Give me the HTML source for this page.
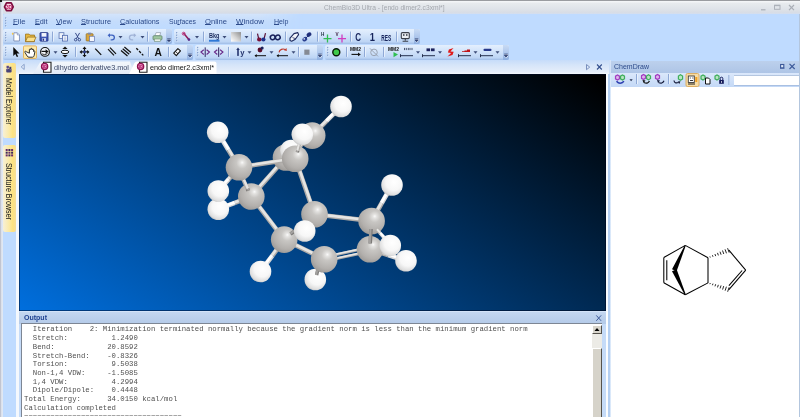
<!DOCTYPE html>
<html lang="en"><head><meta charset="utf-8"><title>ChemBio3D Ultra - [endo dimer2.c3xml*]</title>
<style>
*{box-sizing:border-box;margin:0;padding:0}
html,body{width:800px;height:417px;overflow:hidden;background:#bfdbff;}
body{position:relative;will-change:transform;font-family:"Liberation Sans",sans-serif;font-size:8px;color:#15326e;}
.abs{position:absolute}
#titlebar{left:0;top:0;width:800px;height:14px;background:linear-gradient(#f3f5f7 0,#f3f5f7 2px,#e8ebee 3px,#e1e5ea 55%,#d8dde5 88%,#d3def0 100%);}
#topline{left:0;top:0;width:800px;height:1px;background:#9a9ca0}
#corner{left:0;top:0;width:2px;height:2px;background:#111}
#leftedge{left:0;top:1px;width:3px;height:416px;background:linear-gradient(to right,#bcc0cc 0,#c8ccd8 1.200px,#e2e8f2 1.600px,#dfe7f3 3px)}
#title{left:322px;top:2px;width:124px;height:11px;line-height:11px;text-align:center;color:#a3a7ad;font-size:8.6px;white-space:nowrap;letter-spacing:-0.1px}
#menubar{left:3px;top:14px;width:300px;height:15px;border-radius:2px;background:linear-gradient(#d3e4fb,#c4dcfc 50%,#bfdbff);-webkit-mask-image:linear-gradient(to right,#000 85%,transparent);mask-image:linear-gradient(to right,#000 85%,transparent)}
.menu{top:15px;height:14px;line-height:14px;font-size:8.3px;color:#2a4a8c;white-space:nowrap}
.menu u{text-decoration:underline;text-underline-offset:1px}
.tb{height:15px;border-radius:2px;background:linear-gradient(#e4effd 0,#d3e4fa 40%,#bdd5f5 85%,#9fbce6 100%);}
.ovf{width:6px;height:15px;border-radius:0 2px 2px 0;background:linear-gradient(#c8daf4,#a9c3ea 60%,#8eafe0)}
#tabstrip{left:16px;top:60px;width:592.500px;height:14px;background:linear-gradient(#c6dcfa 0,#d6e5f9 5px,#e6eefa 12px,#f4f8fd 14px)}
.tab{top:61px;height:13px;line-height:13px;font-size:8.3px;white-space:nowrap;color:#333}
#view{left:19px;top:74px;width:587px;height:237px;overflow:hidden;box-shadow:inset 1px 1px 0 rgba(0,10,40,.5),inset -1px -1px 0 rgba(0,0,20,.45);background:linear-gradient(213deg,#000 0%,#000 1.9%,#006fde 100%)}
#view .r{display:none}
#outhead{left:19px;top:311px;width:587px;height:13px;background:linear-gradient(#dce9fb 0,#c3d6f0 1.500px,#b4cae8 100%);}
#outtitle{left:24px;top:312px;height:12px;line-height:12px;font-size:8.3px;font-weight:bold;color:#1f4190}
#outbody{left:21px;top:323.3px;width:581px;height:94px;background:#fff;border-left:1px solid #7d8694;border-top:1px solid #7d8694;overflow:hidden}
#outtext{left:24px;top:325.3px;font-family:"Liberation Mono",monospace;font-size:7.3px;line-height:8.73px;color:#505050;white-space:pre}
#cdhead{left:611px;top:61px;width:189px;height:12px;background:linear-gradient(#bcd0ec,#aec5e6)}
#cdtitle{left:614px;top:61px;height:12px;line-height:12px;font-size:8.3px;color:#2a4a8c}
#cdtool{left:611px;top:73px;width:189px;height:14px;background:linear-gradient(#dbe8fb,#c3d8f6)}
#cdinput{left:734px;top:74.500px;width:64.500px;height:11px;background:#fff;border-top:1px solid #b4c6e0;border-bottom:1px solid #a9c0e2}
#cdbody{left:611px;top:87px;width:187.500px;height:330px;background:#fff}
#rightedge{left:798.500px;top:14px;width:1.500px;height:403px;background:#b3c6de}
.side{left:3px;width:13px;border-radius:2px;background:linear-gradient(to right,#f7f0d6 0,#fbeaa8 45%,#fde280 75%,#f7de98 100%);}
.sidetxt{font-size:8.3px;color:#3a3a3a;white-space:nowrap;transform-origin:0 0;transform:rotate(90deg);line-height:13px;height:13px}
</style></head>
<body>
<div class="abs" id="titlebar"></div>
<div class="abs" id="topline"></div>
<div class="abs" id="leftedge"></div>
<div class="abs" id="corner"></div>
<div class="abs" style="left:324px;top:2px;height:11px;line-height:11px;font-size:8px;color:#a4a8ae;white-space:nowrap;transform-origin:0 50%;transform:scaleX(0.8339)">ChemBio3D Ultra - [endo dimer2.c3xml*]</div>
<div class="abs" id="menubar"></div>
<div class="abs" style="left:13px;top:15px;height:14px;line-height:14px;font-size:7.8px;color:#2c4a8a;white-space:nowrap;transform-origin:0 50%;transform:scaleX(0.9938)"><u style="text-underline-offset:0.3px;text-decoration-thickness:0.8px">F</u>ile</div>
<div class="abs" style="left:34.5px;top:15px;height:14px;line-height:14px;font-size:7.8px;color:#2c4a8a;white-space:nowrap;transform-origin:0 50%;transform:scaleX(0.9302)"><u style="text-underline-offset:0.3px;text-decoration-thickness:0.8px">E</u>dit</div>
<div class="abs" style="left:56px;top:15px;height:14px;line-height:14px;font-size:7.8px;color:#2c4a8a;white-space:nowrap;transform-origin:0 50%;transform:scaleX(0.9543)"><u style="text-underline-offset:0.3px;text-decoration-thickness:0.8px">V</u>iew</div>
<div class="abs" style="left:81px;top:15px;height:14px;line-height:14px;font-size:7.8px;color:#2c4a8a;white-space:nowrap;transform-origin:0 50%;transform:scaleX(0.9481)"><u style="text-underline-offset:0.3px;text-decoration-thickness:0.8px">S</u>tructure</div>
<div class="abs" style="left:120px;top:15px;height:14px;line-height:14px;font-size:7.8px;color:#2c4a8a;white-space:nowrap;transform-origin:0 50%;transform:scaleX(0.9298)"><u style="text-underline-offset:0.3px;text-decoration-thickness:0.8px">C</u>alculations</div>
<div class="abs" style="left:169px;top:15px;height:14px;line-height:14px;font-size:7.8px;color:#2c4a8a;white-space:nowrap;transform-origin:0 50%;transform:scaleX(0.8772)">Su<u style="text-underline-offset:0.3px;text-decoration-thickness:0.8px">r</u>faces</div>
<div class="abs" style="left:205px;top:15px;height:14px;line-height:14px;font-size:7.8px;color:#2c4a8a;white-space:nowrap;transform-origin:0 50%;transform:scaleX(0.9757)"><u style="text-underline-offset:0.3px;text-decoration-thickness:0.8px">O</u>nline</div>
<div class="abs" style="left:236px;top:15px;height:14px;line-height:14px;font-size:7.8px;color:#2c4a8a;white-space:nowrap;transform-origin:0 50%;transform:scaleX(1.0096)"><u style="text-underline-offset:0.3px;text-decoration-thickness:0.8px">W</u>indow</div>
<div class="abs" style="left:273.5px;top:15px;height:14px;line-height:14px;font-size:7.8px;color:#2c4a8a;white-space:nowrap;transform-origin:0 50%;transform:scaleX(0.9036)"><u style="text-underline-offset:0.3px;text-decoration-thickness:0.8px">H</u>elp</div>
<div class="abs tb" style="left:3px;top:29px;width:169px;height:14.5px"></div>
<div class="abs ovf" style="left:166px;top:29px;height:14.5px"></div>
<div class="abs tb" style="left:174px;top:29px;width:246px;height:14.5px"></div>
<div class="abs ovf" style="left:414px;top:29px;height:14.5px"></div>
<div class="abs tb" style="left:3px;top:44.5px;width:190px;height:15px"></div>
<div class="abs ovf" style="left:187px;top:44.5px;height:15px"></div>
<div class="abs tb" style="left:195px;top:44.5px;width:128px;height:15px"></div>
<div class="abs ovf" style="left:317px;top:44.5px;height:15px"></div>
<div class="abs tb" style="left:325px;top:44.5px;width:184px;height:15px"></div>
<div class="abs ovf" style="left:503px;top:44.5px;height:15px"></div>
<div class="abs side" style="top:63px;height:75px"></div>
<div class="abs side" style="top:145px;height:87px"></div>
<div class="abs" style="left:15.4px;top:78.3px;height:13px;line-height:13px;font-size:8.8px;color:#151515;white-space:nowrap;transform-origin:0 0;transform:rotate(90deg) scaleX(0.7926)">Model Explorer</div>
<div class="abs" style="left:15.4px;top:163px;height:13px;line-height:13px;font-size:8.8px;color:#151515;white-space:nowrap;transform-origin:0 0;transform:rotate(90deg) scaleX(0.8096)">Structure Browser</div>
<div class="abs" style="left:16px;top:74px;width:3px;height:343px;background:#f4f8fd"></div>
<div class="abs" style="left:606px;top:74px;width:5px;height:343px;background:linear-gradient(to right,#fbfdff 0,#fbfdff 1.500px,#b4cff2 1.900px,#b4cff2 4.300px,#eef5fd 4.600px)"></div>
<div class="abs" style="left:19px;top:311px;width:587px;height:106px;background:#c5dbf8"></div>
<div class="abs" style="left:608.500px;top:60px;width:2.500px;height:14px;background:linear-gradient(to right,#c9dcf7,#d9e6f9)"></div>
<div class="abs" id="tabstrip"></div>
<svg class="abs" style="left:0;top:0" width="800" height="80" viewBox="0 0 800 80"><defs><linearGradient id="gtab" x1="0" y1="0" x2="0" y2="1"><stop offset="0" stop-color="#f3f7fc"/><stop offset="1" stop-color="#e3ebf7"/></linearGradient></defs><path d="M33 74L40 62.5Q40.600 61.500 42 61.500H130L134 74z" fill="url(#gtab)"/><path d="M129 74L134.500 63Q135.300 61.500 137 61.500H214.500Q216.500 61.500 216.500 63.500V74z" fill="#fff"/></svg>
<div class="abs" style="left:54px;top:61px;height:13px;line-height:13px;font-size:7.8px;color:#3c4868;white-space:nowrap;transform-origin:0 50%;transform:scaleX(0.9353)">dihydro derivative3.mol</div>
<div class="abs" style="left:150px;top:61px;height:13px;line-height:13px;font-size:7.8px;color:#111;white-space:nowrap;transform-origin:0 50%;transform:scaleX(0.9288)">endo dimer2.c3xml*</div>
<div class="abs" id="view"><div class="abs r"></div><svg class="abs" style="left:0;top:0" width="587" height="237" viewBox="19 74 587 237" stroke-linecap="butt"><defs>
<radialGradient id="gH" cx="0.58" cy="0.38" r="0.68" fx="0.6" fy="0.36">
<stop offset="0" stop-color="#ffffff"/><stop offset="0.55" stop-color="#f7f7f7"/><stop offset="0.85" stop-color="#dedede"/><stop offset="1" stop-color="#b8b8b8"/></radialGradient>
<radialGradient id="gC" cx="0.6" cy="0.36" r="0.72" fx="0.62" fy="0.32">
<stop offset="0" stop-color="#fafafa"/><stop offset="0.1" stop-color="#e4e3e1"/><stop offset="0.3" stop-color="#c8c6c3"/><stop offset="0.7" stop-color="#b3b0ad"/><stop offset="0.9" stop-color="#a19e9b"/><stop offset="1" stop-color="#8c8987"/></radialGradient>
</defs>
<line x1="312.2" y1="135.6" x2="326.6" y2="121.0" stroke="#aeaba8" stroke-width="4.6"/>
<line x1="311.8" y1="135.2" x2="326.2" y2="120.7" stroke="#e6e5e3" stroke-width="2.76"/>
<line x1="326.6" y1="121.0" x2="341.0" y2="106.5" stroke="#d8d8d8" stroke-width="4.6"/>
<line x1="326.2" y1="120.7" x2="340.6" y2="106.1" stroke="#ffffff" stroke-width="2.76"/>
<circle cx="341" cy="106.5" r="10.8" fill="url(#gH)"/>
<line x1="251.3" y1="196.5" x2="286.0" y2="157.5" stroke="#aeaba8" stroke-width="4.6"/>
<line x1="250.9" y1="196.2" x2="285.6" y2="157.2" stroke="#e6e5e3" stroke-width="2.76"/>
<line x1="286.0" y1="157.5" x2="312.2" y2="135.6" stroke="#aeaba8" stroke-width="4.6"/>
<line x1="285.7" y1="157.1" x2="311.9" y2="135.2" stroke="#e6e5e3" stroke-width="2.76"/>
<circle cx="286" cy="157.5" r="13.3" fill="url(#gC)"/>
<circle cx="291" cy="150.5" r="10.8" fill="url(#gH)"/>
<circle cx="312.2" cy="135.6" r="13.3" fill="url(#gC)"/>
<line x1="239.0" y1="167.3" x2="295.2" y2="158.8" stroke="#aeaba8" stroke-width="4.4"/>
<line x1="238.9" y1="166.8" x2="295.1" y2="158.3" stroke="#e6e5e3" stroke-width="2.64"/>
<line x1="239.0" y1="167.3" x2="228.3" y2="149.8" stroke="#aeaba8" stroke-width="4.6"/>
<line x1="239.4" y1="167.0" x2="228.8" y2="149.5" stroke="#e6e5e3" stroke-width="2.76"/>
<line x1="228.3" y1="149.8" x2="217.7" y2="132.3" stroke="#d8d8d8" stroke-width="4.6"/>
<line x1="228.8" y1="149.5" x2="218.1" y2="132.0" stroke="#ffffff" stroke-width="2.76"/>
<circle cx="217.7" cy="132.3" r="10.8" fill="url(#gH)"/>
<line x1="295.2" y1="158.8" x2="314.5" y2="214.2" stroke="#aeaba8" stroke-width="4.6"/>
<line x1="295.7" y1="158.6" x2="315.0" y2="214.1" stroke="#e6e5e3" stroke-width="2.76"/>
<line x1="314.5" y1="214.2" x2="371.6" y2="221.0" stroke="#aeaba8" stroke-width="4.6"/>
<line x1="314.6" y1="213.8" x2="371.7" y2="220.5" stroke="#e6e5e3" stroke-width="2.76"/>
<line x1="371.6" y1="221.0" x2="381.8" y2="203.0" stroke="#aeaba8" stroke-width="4.6"/>
<line x1="371.2" y1="220.8" x2="381.4" y2="202.8" stroke="#e6e5e3" stroke-width="2.76"/>
<line x1="381.8" y1="203.0" x2="392.0" y2="185.0" stroke="#d8d8d8" stroke-width="4.6"/>
<line x1="381.4" y1="202.8" x2="391.6" y2="184.8" stroke="#ffffff" stroke-width="2.76"/>
<circle cx="392" cy="185" r="10.8" fill="url(#gH)"/>
<line x1="251.3" y1="196.5" x2="284.2" y2="239.6" stroke="#aeaba8" stroke-width="4.6"/>
<line x1="251.7" y1="196.2" x2="284.6" y2="239.3" stroke="#e6e5e3" stroke-width="2.76"/>
<line x1="284.2" y1="239.6" x2="324.2" y2="259.2" stroke="#aeaba8" stroke-width="4.6"/>
<line x1="284.4" y1="239.2" x2="324.4" y2="258.8" stroke="#e6e5e3" stroke-width="2.76"/>
<line x1="284.2" y1="239.6" x2="272.4" y2="255.6" stroke="#aeaba8" stroke-width="4.6"/>
<line x1="283.8" y1="239.3" x2="271.9" y2="255.3" stroke="#e6e5e3" stroke-width="2.76"/>
<line x1="272.4" y1="255.6" x2="260.5" y2="271.5" stroke="#d8d8d8" stroke-width="4.6"/>
<line x1="271.9" y1="255.3" x2="260.1" y2="271.2" stroke="#ffffff" stroke-width="2.76"/>
<circle cx="260.5" cy="271.5" r="10.8" fill="url(#gH)"/>
<line x1="323.8" y1="257.3" x2="369.6" y2="247.3" stroke="#aeaba8" stroke-width="2.8"/>
<line x1="323.7" y1="256.8" x2="369.5" y2="246.9" stroke="#e6e5e3" stroke-width="1.68"/>
<line x1="324.6" y1="261.2" x2="370.4" y2="251.3" stroke="#aeaba8" stroke-width="2.8"/>
<line x1="324.5" y1="260.7" x2="370.3" y2="250.8" stroke="#e6e5e3" stroke-width="1.68"/>
<circle cx="315.3" cy="279.5" r="10.8" fill="url(#gH)"/>
<line x1="318.2" y1="268.0" x2="316.6" y2="275.0" stroke="#7d7b79" stroke-width="3.4"/>
<line x1="317.7" y1="267.9" x2="316.1" y2="274.9" stroke="#a3a19f" stroke-width="2.04"/>
<line x1="251.3" y1="196.5" x2="234.8" y2="202.9" stroke="#aeaba8" stroke-width="4.6"/>
<line x1="251.1" y1="196.0" x2="234.6" y2="202.4" stroke="#e6e5e3" stroke-width="2.76"/>
<line x1="234.8" y1="202.9" x2="218.3" y2="209.2" stroke="#d8d8d8" stroke-width="4.6"/>
<line x1="234.6" y1="202.4" x2="218.1" y2="208.8" stroke="#ffffff" stroke-width="2.76"/>
<circle cx="218.3" cy="209.25" r="10.8" fill="url(#gH)"/>
<circle cx="251.3" cy="196.5" r="13.3" fill="url(#gC)"/>
<line x1="243.0" y1="179.0" x2="247.5" y2="189.0" stroke="#aeaba8" stroke-width="4.0"/>
<line x1="243.5" y1="178.8" x2="248.0" y2="188.8" stroke="#e6e5e3" stroke-width="2.40"/>
<line x1="247.5" y1="189.0" x2="248.3" y2="190.8" stroke="#7d7b79" stroke-width="4.0"/>
<line x1="248.0" y1="188.8" x2="248.8" y2="190.6" stroke="#a3a19f" stroke-width="2.40"/>
<line x1="239.0" y1="167.3" x2="228.7" y2="179.2" stroke="#aeaba8" stroke-width="4.6"/>
<line x1="238.6" y1="167.0" x2="228.3" y2="178.8" stroke="#e6e5e3" stroke-width="2.76"/>
<line x1="228.7" y1="179.2" x2="218.3" y2="191.0" stroke="#d8d8d8" stroke-width="4.6"/>
<line x1="228.3" y1="178.8" x2="217.9" y2="190.7" stroke="#ffffff" stroke-width="2.76"/>
<circle cx="218.3" cy="191" r="10.8" fill="url(#gH)"/>
<circle cx="239" cy="167.3" r="13.3" fill="url(#gC)"/>
<circle cx="295.2" cy="158.75" r="13.3" fill="url(#gC)"/>
<line x1="297.3" y1="152.3" x2="297.8" y2="150.5" stroke="#7d7b79" stroke-width="3.4"/>
<line x1="296.8" y1="152.2" x2="297.3" y2="150.4" stroke="#a3a19f" stroke-width="2.04"/>
<line x1="297.8" y1="150.5" x2="299.5" y2="144.0" stroke="#aeaba8" stroke-width="3.4"/>
<line x1="297.3" y1="150.4" x2="299.0" y2="143.9" stroke="#e6e5e3" stroke-width="2.04"/>
<circle cx="302.3" cy="134.3" r="10.8" fill="url(#gH)"/>
<circle cx="284.2" cy="239.6" r="13.3" fill="url(#gC)"/>
<line x1="290.5" y1="234.0" x2="297.0" y2="229.5" stroke="#7d7b79" stroke-width="3.6"/>
<line x1="290.2" y1="233.6" x2="296.7" y2="229.1" stroke="#a3a19f" stroke-width="2.16"/>
<circle cx="324.2" cy="259.25" r="13.3" fill="url(#gC)"/>
<circle cx="314.5" cy="214.25" r="13.3" fill="url(#gC)"/>
<line x1="370.0" y1="249.3" x2="388.0" y2="255.0" stroke="#aeaba8" stroke-width="4.6"/>
<line x1="370.2" y1="248.8" x2="388.2" y2="254.5" stroke="#e6e5e3" stroke-width="2.76"/>
<line x1="388.0" y1="255.0" x2="406.0" y2="260.8" stroke="#d8d8d8" stroke-width="4.6"/>
<line x1="388.2" y1="254.5" x2="406.2" y2="260.3" stroke="#ffffff" stroke-width="2.76"/>
<circle cx="406" cy="260.75" r="10.8" fill="url(#gH)"/>
<circle cx="370" cy="249.3" r="13.3" fill="url(#gC)"/>
<circle cx="371.6" cy="221" r="13.3" fill="url(#gC)"/>
<line x1="371.0" y1="229.0" x2="370.2" y2="243.5" stroke="#7d7b79" stroke-width="3.6"/>
<line x1="370.5" y1="229.0" x2="369.7" y2="243.5" stroke="#a3a19f" stroke-width="2.16"/>
<line x1="376.5" y1="229.5" x2="380.0" y2="233.2" stroke="#aeaba8" stroke-width="3.4"/>
<line x1="376.9" y1="229.2" x2="380.4" y2="232.9" stroke="#e6e5e3" stroke-width="2.04"/>
<line x1="380.0" y1="233.2" x2="384.0" y2="237.5" stroke="#d8d8d8" stroke-width="3.4"/>
<line x1="380.4" y1="232.9" x2="384.4" y2="237.2" stroke="#ffffff" stroke-width="2.04"/>
<circle cx="390.25" cy="245.5" r="10.8" fill="url(#gH)"/>
<circle cx="304.7" cy="231" r="10.8" fill="url(#gH)"/>
</svg></div>
<div class="abs" id="outhead"></div>
<div class="abs" style="left:24px;top:312px;height:12px;line-height:12px;font-size:7.8px;color:#1f4190;font-weight:bold;white-space:nowrap;transform-origin:0 50%;transform:scaleX(0.9003)">Output</div>
<div class="abs" id="outbody"></div>
<div class="abs" id="outtext">  Iteration    2: Minimization terminated normally because the gradient norm is less than the minimum gradient norm
  Stretch:          1.2490
  Bend:            20.8592
  Stretch-Bend:    -0.8326
  Torsion:          9.5038
  Non-1,4 VDW:     -1.5085
  1,4 VDW:          4.2994
  Dipole/Dipole:    0.4448
Total Energy:      34.0150 kcal/mol
Calculation completed
====================================</div>
<div class="abs" style="left:592px;top:325px;width:10px;height:92px;background:#ecebe6"></div>
<div class="abs" style="left:592px;top:325px;width:10px;height:9px;background:#d8d5cc;border:1px solid;border-color:#fff #55524c #55524c #fff"></div>
<svg class="abs" style="left:592px;top:325px" width="10" height="9" viewBox="0 0 10 9"><path d="M2.500 6h5l-2.500-3z" fill="#000"/></svg>
<div class="abs" style="left:592px;top:348px;width:10px;height:69px;background:#d6d3ca;border:1px solid;border-color:#fff #55524c #55524c #fff;border-bottom:none"></div>
<div class="abs" id="cdhead"></div>
<div class="abs" style="left:614px;top:61px;height:12px;line-height:12px;font-size:7.8px;color:#2c4a8a;white-space:nowrap;transform-origin:0 50%;transform:scaleX(0.8974)">ChemDraw</div>
<div class="abs" id="cdtool"></div>
<div class="abs" id="cdinput"></div>
<div class="abs" id="cdbody"></div>
<div class="abs" id="rightedge"></div>
<svg class="abs" style="left:0;top:0" width="800" height="417" viewBox="0 0 800 417">
<polygon points="619.5,78.8 617.5,80.1 615.5,78.8 615.5,76.2 617.5,74.9 619.5,76.2" fill="#dcb4ea" stroke="#a23cc2" stroke-width="1.2"/>
<polygon points="624.5,78.8 622.5,80.1 620.5,78.8 620.5,76.2 622.5,74.9 624.5,76.2" fill="#b9e6c3" stroke="#3fae5c" stroke-width="1.2"/>
<path d="M616.5 81.300q3.500 4 7.500 0" fill="none" stroke="#2c3fb0" stroke-width="1.500"/>
<path d="M629.500 79.300h3.200l-1.600 1.900z" fill="#25304e"/>
<rect x="636" y="74" width="1" height="10" fill="#8fa9d6"/><rect x="637" y="74" width="1" height="10" fill="#eef4fd" opacity=".8"/>
<polygon points="645.5,78.3 643.5,79.6 641.5,78.3 641.5,75.7 643.5,74.4 645.5,75.7" fill="#dcb4ea" stroke="#a23cc2" stroke-width="1.2"/>
<polygon points="650.5,78.6 648.5,79.9 646.5,78.6 646.5,76.0 648.5,74.7 650.5,76.0" fill="#b9e6c3" stroke="#3fae5c" stroke-width="1.2"/>
<path d="M644 82.500q3.500 2 5.500-1.500" fill="none" stroke="#111" stroke-width="1.200"/><path d="M642.500 80l3 .5-2 2.600z" fill="#111"/>
<polygon points="659.5,78.3 657.5,79.6 655.5,78.3 655.5,75.7 657.5,74.4 659.5,75.7" fill="#dcb4ea" stroke="#a23cc2" stroke-width="1.2"/>
<path d="M658.500 82.500q3.800 2 5.500-1.800" fill="none" stroke="#141a3a" stroke-width="1.200"/><path d="M657 80l3 .5-2 2.600z" fill="#141a3a"/>
<rect x="668" y="74" width="1" height="10" fill="#8fa9d6"/><rect x="669" y="74" width="1" height="10" fill="#eef4fd" opacity=".8"/>
<polygon points="682.6,78.9 680.5,80.3 678.4,78.9 678.4,76.1 680.5,74.7 682.6,76.1" fill="#b9e6c3" stroke="#3fae5c" stroke-width="1.2"/>
<path d="M674 80.500q.5 3.500 4.500 2" fill="none" stroke="#141a3a" stroke-width="1.200"/><path d="M680.500 81.200l-2.800.4 1.600 2.400z" fill="#141a3a"/>
<rect x="686" y="73.500" width="13" height="13" rx="1.500" fill="#f7dca4" stroke="#dcae62" stroke-width="1"/>
<rect x="688.300" y="76" width="6" height="6.500" fill="#fff" stroke="#3a3a3a" stroke-width=".9"/><path d="M689.800 78h1M692.300 78h1M690 80.500h3" stroke="#222" stroke-width=".9"/><rect x="695.300" y="77" width="2" height="5" fill="#f0a020"/><path d="M688 84h7" stroke="#222" stroke-width="1"/>
<polygon points="705.0,78.8 703.0,80.1 701.0,78.8 701.0,76.2 703.0,74.9 705.0,76.2" fill="#b9e6c3" stroke="#3fae5c" stroke-width="1.2"/>
<path d="M705.500 78h3l1.500 1.500v4.500h-4.500z" fill="#fff" stroke="#111" stroke-width="1"/>
<polygon points="719.0,78.8 717.0,80.1 715.0,78.8 715.0,76.2 717.0,74.9 719.0,76.2" fill="#b9e6c3" stroke="#3fae5c" stroke-width="1.2"/>
<rect x="719.200" y="80" width="4.600" height="3.800" fill="#141a5a"/><path d="M720.200 80v-1.500a1.300 1.300 0 0 1 2.600 0v1.500" fill="none" stroke="#141a5a" stroke-width="1"/><rect x="721" y="81.300" width="1" height="1.300" fill="#fff"/>
<rect x="728" y="75" width="1.500" height="10" fill="#a9bfe2"/>
<rect x="780.600" y="64.500" width="3.200" height="3.400" fill="#dfe8f6" stroke="#3d5a9a" stroke-width="1.100"/><path d="M780 68.300h4.400" stroke="#3d5a9a" stroke-width=".8"/>
<path d="M789.500 63.800l5.200 5.200M794.700 63.800l-5.200 5.200" stroke="#3d5a9a" stroke-width="1.200"/>
<line x1="685.3" y1="245.4" x2="663.8" y2="257.5" stroke="#000" stroke-width="1.05"/>
<line x1="663.8" y1="257.5" x2="663.8" y2="282.8" stroke="#000" stroke-width="1.05"/>
<line x1="663.8" y1="282.8" x2="685.3" y2="294.7" stroke="#000" stroke-width="1.05"/>
<line x1="685.3" y1="294.7" x2="708.0" y2="282.9" stroke="#000" stroke-width="1.05"/>
<line x1="708.0" y1="282.9" x2="708.0" y2="257.7" stroke="#000" stroke-width="1.05"/>
<line x1="708.0" y1="257.7" x2="685.3" y2="245.4" stroke="#000" stroke-width="1.05"/>
<line x1="666.8" y1="260.3" x2="666.8" y2="280.2" stroke="#000" stroke-width="1.05"/>
<line x1="728.9" y1="250.2" x2="745.7" y2="270.2" stroke="#000" stroke-width="1.05"/>
<line x1="745.7" y1="270.2" x2="728.9" y2="289.7" stroke="#000" stroke-width="1.05"/>
<line x1="742.1" y1="270.5" x2="728.9" y2="285.7" stroke="#000" stroke-width="1.05"/>
<polygon points="684.8,245.2 672.0,269.3 676.6,271.3 685.8,245.6" fill="#000"/>
<polygon points="685.8,294.5 676.6,269.3 672.0,271.3 684.8,294.9" fill="#000"/>
<line x1="710.29" y1="257.51" x2="709.89" y2="256.39" stroke="#000" stroke-width=".85"/>
<line x1="712.99" y1="256.81" x2="712.42" y2="255.21" stroke="#000" stroke-width=".85"/>
<line x1="715.69" y1="256.11" x2="714.94" y2="254.04" stroke="#000" stroke-width=".85"/>
<line x1="718.38" y1="255.41" x2="717.47" y2="252.87" stroke="#000" stroke-width=".85"/>
<line x1="721.08" y1="254.71" x2="720.00" y2="251.69" stroke="#000" stroke-width=".85"/>
<line x1="723.78" y1="254.00" x2="722.53" y2="250.52" stroke="#000" stroke-width=".85"/>
<line x1="726.47" y1="253.30" x2="725.06" y2="249.35" stroke="#000" stroke-width=".85"/>
<line x1="729.17" y1="252.60" x2="727.58" y2="248.18" stroke="#000" stroke-width=".85"/>
<line x1="709.90" y1="284.15" x2="710.28" y2="283.01" stroke="#000" stroke-width=".85"/>
<line x1="712.44" y1="285.24" x2="712.97" y2="283.62" stroke="#000" stroke-width=".85"/>
<line x1="714.97" y1="286.33" x2="715.66" y2="284.23" stroke="#000" stroke-width=".85"/>
<line x1="717.51" y1="287.41" x2="718.35" y2="284.85" stroke="#000" stroke-width=".85"/>
<line x1="720.04" y1="288.50" x2="721.04" y2="285.46" stroke="#000" stroke-width=".85"/>
<line x1="722.58" y1="289.59" x2="723.72" y2="286.07" stroke="#000" stroke-width=".85"/>
<line x1="725.12" y1="290.68" x2="726.41" y2="286.68" stroke="#000" stroke-width=".85"/>
<line x1="727.65" y1="291.76" x2="729.10" y2="287.30" stroke="#000" stroke-width=".85"/>
</svg>
<svg class="abs" style="left:0;top:0;font-family:'Liberation Sans',sans-serif" width="800" height="417" viewBox="0 0 800 417"><defs><linearGradient id="gsq" x1="1" y1="0" x2="0" y2="1"><stop offset="0" stop-color="#8c8c8c"/><stop offset=".55" stop-color="#d4d4d4"/><stop offset="1" stop-color="#ffffff"/></linearGradient></defs>
<path d="M6.500 2.900h4.700l2 3.900-2 3.900H6.500L4.500 6.800z" fill="#fbd3e4" stroke="#7d0c3e" stroke-width="1.700" stroke-linejoin="round"/>
<text x="8.85" y="8.7" font-size="4.8" font-weight="bold" fill="#b8145a" text-anchor="middle" letter-spacing="-0.2">3D</text>
<path d="M761 9.800h4.500" stroke="#a9aeb6" stroke-width="1.200"/>
<rect x="774.500" y="5.300" width="5.500" height="4" fill="none" stroke="#adb2ba" stroke-width="1"/><path d="M774.500 5.500h5.500" stroke="#adb2ba" stroke-width="1.300"/>
<path d="M789 5l5 5.200M794 5l-5 5.200" stroke="#a9aeb6" stroke-width="1.200"/>
<rect x="5" y="17.5" width="1.3" height="1.3" fill="#6f8fc4"/>
<rect x="5.6" y="18.1" width="1" height="1" fill="#fff" opacity=".8"/>
<rect x="5" y="20.1" width="1.3" height="1.3" fill="#6f8fc4"/>
<rect x="5.6" y="20.7" width="1" height="1" fill="#fff" opacity=".8"/>
<rect x="5" y="22.7" width="1.3" height="1.3" fill="#6f8fc4"/>
<rect x="5.6" y="23.3" width="1" height="1" fill="#fff" opacity=".8"/>
<rect x="5" y="25.3" width="1.3" height="1.3" fill="#6f8fc4"/>
<rect x="5.6" y="25.9" width="1" height="1" fill="#fff" opacity=".8"/>
<g transform="translate(0,0.6)">
<rect x="5" y="31.5" width="1.3" height="1.3" fill="#6f8fc4"/>
<rect x="5.6" y="32.1" width="1" height="1" fill="#fff" opacity=".8"/>
<rect x="5" y="34.1" width="1.3" height="1.3" fill="#6f8fc4"/>
<rect x="5.6" y="34.7" width="1" height="1" fill="#fff" opacity=".8"/>
<rect x="5" y="36.7" width="1.3" height="1.3" fill="#6f8fc4"/>
<rect x="5.6" y="37.3" width="1" height="1" fill="#fff" opacity=".8"/>
<rect x="5" y="39.3" width="1.3" height="1.3" fill="#6f8fc4"/>
<rect x="5.6" y="39.9" width="1" height="1" fill="#fff" opacity=".8"/>
<g transform="translate(2.24 5.12) scale(0.86)"><path d="M13.5 31.5h4l2.5 2.5v7h-6.5z" fill="#fff" stroke="#6b7fae" stroke-width=".9"/><path d="M17.5 31.5v2.5h2.5" fill="#dfe8f6" stroke="#6b7fae" stroke-width=".7"/><path d="M12 31l1.5 1.5-1.5 1.5-1-1.5z" fill="#f6c646"/></g>
<path d="M25.5 33.5h3.5l1 1h4.5v6.5h-9z" fill="#e7b83f" stroke="#9a7420" stroke-width=".8"/><path d="M25.5 41l2-4.5h8.5l-2 4.5z" fill="#fbe08a" stroke="#9a7420" stroke-width=".8"/>
<g transform="translate(4.40 3.64) scale(0.9)"><rect x="39.5" y="31.5" width="9" height="9.5" rx=".8" fill="#3d55b5" stroke="#27337e" stroke-width=".8"/><rect x="41.3" y="32" width="5.4" height="4" fill="#f1f4fb"/><rect x="42" y="37.6" width="4.2" height="3.2" fill="#c9d2ee"/><rect x="42.6" y="38.2" width="1.4" height="2.4" fill="#27337e"/></g>
<rect x="52" y="31" width="1" height="10" fill="#8fa9d6"/><rect x="53" y="31" width="1" height="10" fill="#eef4fd" opacity=".8"/>
<g transform="translate(7.58 4.37) scale(0.88)"><rect x="58.5" y="31.5" width="5.5" height="6.5" fill="#eef3fb" stroke="#5872b0" stroke-width=".9"/><rect x="62.5" y="34.5" width="5.5" height="6.5" fill="#f7f9fd" stroke="#4a66ac" stroke-width=".9"/><path d="M63.8 36.5h3M63.8 38h3M63.8 39.5h3" stroke="#8aa0d0" stroke-width=".6"/></g>
<g transform="translate(12.40 5.86) scale(0.84)"><path d="M75 31.5l4 7M80 31.5l-4 7" stroke="#2c3f80" stroke-width="1.1"/><circle cx="75.3" cy="39.6" r="1.5" fill="none" stroke="#2c3f80" stroke-width="1"/><circle cx="79.7" cy="39.6" r="1.5" fill="none" stroke="#2c3f80" stroke-width="1"/></g>
<g transform="translate(12.63 5.12) scale(0.86)"><rect x="85.5" y="32.5" width="8" height="8.5" rx=".8" fill="#d9a53a" stroke="#8a6a22" stroke-width=".8"/><rect x="87.6" y="31.3" width="3.8" height="2.2" fill="#7f8aa8"/><rect x="89.5" y="35.5" width="5.5" height="6" fill="#f4f6fc" stroke="#5f76b2" stroke-width=".8"/></g>
<g transform="translate(19.98 6.55) scale(0.82)"><path d="M109 34.2h3.2a2.9 2.9 0 0 1 0 5.8h-1.6" fill="none" stroke="#3f63c0" stroke-width="1.6"/><path d="M106.8 34.4l3-2.6v5.2z" fill="#3f63c0"/></g>
<path d="M118.5 35.4h4l-2 2.4z" fill="#3c4c78"/>
<g transform="translate(23.76 6.55) scale(0.82)"><path d="M135 34.2h-3.2a2.9 2.9 0 0 0 0 5.8h1.6" fill="none" stroke="#9fb2d6" stroke-width="1.6"/><path d="M137.2 34.4l-3-2.6v5.2z" fill="#9fb2d6"/></g>
<path d="M140.5 35.4h4l-2 2.4z" fill="#3c4c78"/>
<rect x="147" y="31" width="1" height="10" fill="#8fa9d6"/><rect x="148" y="31" width="1" height="10" fill="#eef4fd" opacity=".8"/>
<g transform="translate(15.75 3.66) scale(0.9)"><path d="M154.5 35l1.5-3.5h5l-1 3.5z" fill="#fff" stroke="#7f8c9e" stroke-width=".7"/><rect x="152.5" y="35" width="10" height="4.6" rx="1" fill="#9fc7a0" stroke="#5a7f66" stroke-width=".8"/><rect x="154" y="38.6" width="7" height="2.6" fill="#e8f0e4" stroke="#6a8a72" stroke-width=".6"/></g>
<path d="M167.39999999999998 38.6h3.6M167.6 39.8h3.2l-1.6 1.8z" stroke="#fff" stroke-width=".9" fill="#fff"/>
<path d="M167.2 38.2h3.6M167.39999999999998 39.4h3.2l-1.6 1.8z" stroke="#2b3f73" stroke-width=".8" fill="#2b3f73"/>
<rect x="176" y="31.5" width="1.3" height="1.3" fill="#6f8fc4"/>
<rect x="176.6" y="32.1" width="1" height="1" fill="#fff" opacity=".8"/>
<rect x="176" y="34.1" width="1.3" height="1.3" fill="#6f8fc4"/>
<rect x="176.6" y="34.7" width="1" height="1" fill="#fff" opacity=".8"/>
<rect x="176" y="36.7" width="1.3" height="1.3" fill="#6f8fc4"/>
<rect x="176.6" y="37.3" width="1" height="1" fill="#fff" opacity=".8"/>
<rect x="176" y="39.3" width="1.3" height="1.3" fill="#6f8fc4"/>
<rect x="176.6" y="39.9" width="1" height="1" fill="#fff" opacity=".8"/>
<g transform="translate(22.36 4.34) scale(0.88)"><path d="M183.5 32.5l5.5 6.5" stroke="#8c1b5a" stroke-width="1.7" stroke-linecap="round"/><circle cx="183.3" cy="32.6" r="1.6" fill="none" stroke="#c2307a" stroke-width="1.1"/><circle cx="189.3" cy="39.4" r="1.5" fill="#5a2a86"/></g>
<path d="M195 35.4h4l-2 2.4z" fill="#3c4c78"/>
<rect x="203" y="31" width="1" height="10" fill="#8fa9d6"/><rect x="204" y="31" width="1" height="10" fill="#eef4fd" opacity=".8"/>
<text x="209" y="37.4" font-size="6.4" font-weight="bold" fill="#1d2d5e" text-anchor="start" textLength="10.5" lengthAdjust="spacingAndGlyphs">Bkg</text>
<rect x="209" y="39.2" width="10.5" height="1.9" fill="#2f78d6"/>
<path d="M222.5 35.4h4l-2 2.4z" fill="#3c4c78"/>
<rect x="231" y="31.5" width="10" height="9.5" fill="url(#gsq)"/>
<path d="M244.5 35.4h4l-2 2.4z" fill="#3c4c78"/>
<rect x="251" y="31" width="1" height="10" fill="#8fa9d6"/><rect x="252" y="31" width="1" height="10" fill="#eef4fd" opacity=".8"/>
<path d="M257.5 33l1.2 5.2M265.5 32.5l-1.4 5.6" stroke="#5a1038" stroke-width="1.2" fill="none"/><ellipse cx="259.3" cy="38.8" rx="2.3" ry="2" fill="#7a1238" /><ellipse cx="263.4" cy="38.8" rx="2.1" ry="2" fill="#1f2f8a"/>
<ellipse cx="272.7" cy="36.8" rx="2.4" ry="2.3" fill="none" stroke="#18205a" stroke-width="1.5" transform="rotate(-20 272.7 36.8)"/><ellipse cx="277.8" cy="36.8" rx="2.4" ry="2.3" fill="none" stroke="#18205a" stroke-width="1.5" transform="rotate(-20 277.8 36.8)"/>
<rect x="285" y="31" width="1" height="10" fill="#8fa9d6"/><rect x="286" y="31" width="1" height="10" fill="#eef4fd" opacity=".8"/>
<path d="M290 37.5l4-4.5 3.8-1 .8 2-3.3 4.6-3.6 2.1-1.7-.8z" fill="#f4f7fc" stroke="#1d2a5e" stroke-width="1.1" stroke-linejoin="round"/><path d="M292.5 37l3.5 1.2" stroke="#1d2a5e" stroke-width=".8"/>
<ellipse cx="309" cy="34" rx="2.6" ry="2" fill="#1f2f7a" transform="rotate(-30 309 34)"/><ellipse cx="304.8" cy="38.6" rx="2.6" ry="2.1" fill="#2a3f8f" transform="rotate(-30 304.8 38.6)"/><path d="M306 37.5l2-2.2" stroke="#1f2f7a" stroke-width="1"/><circle cx="304.2" cy="38.3" r=".8" fill="#dfe8fa"/>
<rect x="317" y="31" width="1" height="10" fill="#8fa9d6"/><rect x="318" y="31" width="1" height="10" fill="#eef4fd" opacity=".8"/>
<text x="321" y="35" font-size="4.6" font-weight="bold" fill="#1d2d3e" text-anchor="start" >H</text>
<path d="M323.5 38h8M327.5 34v8" stroke="#2fbf52" stroke-width="1.3"/>
<text x="335.5" y="35" font-size="4.6" font-weight="bold" fill="#3a1d3e" text-anchor="start" >V</text>
<path d="M338 38h8M342 34v8" stroke="#d23cc0" stroke-width="1.3"/>
<rect x="350" y="31" width="1" height="10" fill="#8fa9d6"/><rect x="351" y="31" width="1" height="10" fill="#eef4fd" opacity=".8"/>
<text x="355.3" y="40.3" font-size="10.2" font-weight="bold" fill="#16235a" text-anchor="start" textLength="5.800" lengthAdjust="spacingAndGlyphs">C</text>
<text x="369.8" y="40.3" font-size="10.2" font-weight="bold" fill="#16235a" text-anchor="start" textLength="5.200" lengthAdjust="spacingAndGlyphs">1</text>
<text x="381.3" y="40.2" font-size="8.2" font-weight="bold" fill="#16235a" text-anchor="start" textLength="10" lengthAdjust="spacingAndGlyphs">RES</text>
<rect x="396" y="31" width="1" height="10" fill="#8fa9d6"/><rect x="397" y="31" width="1" height="10" fill="#eef4fd" opacity=".8"/>
<rect x="401.3" y="32" width="8" height="6" rx="1" fill="#e9edf2" stroke="#3a3f4a" stroke-width="1.1"/><rect x="403" y="33.6" width="1.5" height="1.6" fill="#3a3f4a"/><rect x="406" y="33.6" width="1.5" height="1.6" fill="#3a3f4a"/><path d="M405.3 38.2v1.8M402.6 40.6h5.6" stroke="#3a3f4a" stroke-width="1.1"/>
<path d="M415.0 38.6h3.6M415.2 39.8h3.2l-1.6 1.8z" stroke="#fff" stroke-width=".9" fill="#fff"/>
<path d="M414.8 38.2h3.6M415.0 39.4h3.2l-1.6 1.8z" stroke="#2b3f73" stroke-width=".8" fill="#2b3f73"/>
</g>
<g transform="translate(0,0.4)">
<rect x="5" y="46.5" width="1.3" height="1.3" fill="#6f8fc4"/>
<rect x="5.6" y="47.1" width="1" height="1" fill="#fff" opacity=".8"/>
<rect x="5" y="49.1" width="1.3" height="1.3" fill="#6f8fc4"/>
<rect x="5.6" y="49.7" width="1" height="1" fill="#fff" opacity=".8"/>
<rect x="5" y="51.7" width="1.3" height="1.3" fill="#6f8fc4"/>
<rect x="5.6" y="52.3" width="1" height="1" fill="#fff" opacity=".8"/>
<rect x="5" y="54.3" width="1.3" height="1.3" fill="#6f8fc4"/>
<rect x="5.6" y="54.9" width="1" height="1" fill="#fff" opacity=".8"/>
<path d="M13.3 46.5v9l2-2 1.5 3.2 1.4-.7-1.5-3h2.8z" fill="#0a0a0a"/>
<rect x="23.5" y="45.5" width="13" height="12.5" rx="1" fill="#fde9a9" stroke="#e2b35e" stroke-width="1"/>
<path d="M26.2 51.3c-1-1-1.8-.2-1.2.8l2.2 3.6c.4.8 1 1.1 1.8 1.100h3.300c1 0 1.500-.6 1.800-1.600l.8-3.700c.2-1-.9-1.300-1.300-.400v-1.600c0-1-1.300-1-1.400 0v-.8c0-1-1.400-1-1.400 0v.6c0-1-1.400-1-1.400 0v3.500z" fill="#fff" stroke="#1a1a1a" stroke-width=".9" stroke-linejoin="round"/>
<circle cx="45" cy="51.5" r="4.4" fill="#f2f5fa" stroke="#111" stroke-width="1.1"/><path d="M41.500 51h5.5" stroke="#111" stroke-width="1.2"/><path d="M48.6 51.2l-3-2.300v4.600z" fill="#111"/><path d="M42 53.500q3 1.800 5.500-.3" stroke="#111" stroke-width=".8" fill="none"/>
<path d="M53.5 50.9h4l-2 2.4z" fill="#3c4c78"/>
<path d="M65 46l2.600 2.500h-5.200z" fill="#111"/><path d="M65 57.200l2.600-2.500h-5.200z" fill="#111"/><ellipse cx="65" cy="51.500" rx="3.800" ry="1.700" fill="#fff" stroke="#111" stroke-width="1"/>
<rect x="75" y="46.5" width="1" height="10" fill="#8fa9d6"/><rect x="76" y="46.5" width="1" height="10" fill="#eef4fd" opacity=".8"/>
<path d="M84.500 46.200l2 2.300h-4zM84.500 56.800l2-2.300h-4zM79.500 51.500l2.300-2v4zM89.500 51.500l-2.300-2v4z" fill="#111"/><path d="M81 51.500h7M84.500 48v7" stroke="#111" stroke-width="1.200"/><circle cx="84.500" cy="51.500" r="1.300" fill="#2d3f8f"/>
<path d="M95.200 48.200l6 6.300" stroke="#111" stroke-width="1.300"/>
<path d="M108 48.800l6 6.200M110 47.300l6 6.200" stroke="#111" stroke-width="1.200"/>
<path d="M121 50l6.500 5.500M122.700 48.300l6.500 5.500M124.400 46.600l6.500 5.500" stroke="#111" stroke-width="1.250"/>
<path d="M136.300 47.800l7 7.200" stroke="#111" stroke-width="1.300" stroke-dasharray="2.6 1.400"/>
<rect x="148" y="46.5" width="1" height="10" fill="#8fa9d6"/><rect x="149" y="46.5" width="1" height="10" fill="#eef4fd" opacity=".8"/>
<text x="158.2" y="55.4" font-size="10.2" font-weight="bold" fill="#111" text-anchor="middle" >A</text>
<rect x="168" y="46.5" width="1" height="10" fill="#8fa9d6"/><rect x="169" y="46.5" width="1" height="10" fill="#eef4fd" opacity=".8"/>
<path d="M173.700 52.800l4.200-4.600 2.600 2.300-4.200 4.700z" fill="#f7f7f9" stroke="#111" stroke-width="1.100" stroke-linejoin="round"/><path d="M175.300 51l2.700 2.400" stroke="#111" stroke-width=".8"/>
<path d="M188.39999999999998 54.1h3.6M188.6 55.3h3.2l-1.6 1.8z" stroke="#fff" stroke-width=".9" fill="#fff"/>
<path d="M188.2 53.7h3.6M188.39999999999998 54.9h3.2l-1.6 1.8z" stroke="#2b3f73" stroke-width=".8" fill="#2b3f73"/>
<rect x="197" y="46.5" width="1.3" height="1.3" fill="#6f8fc4"/>
<rect x="197.6" y="47.1" width="1" height="1" fill="#fff" opacity=".8"/>
<rect x="197" y="49.1" width="1.3" height="1.3" fill="#6f8fc4"/>
<rect x="197.6" y="49.7" width="1" height="1" fill="#fff" opacity=".8"/>
<rect x="197" y="51.7" width="1.3" height="1.3" fill="#6f8fc4"/>
<rect x="197.6" y="52.3" width="1" height="1" fill="#fff" opacity=".8"/>
<rect x="197" y="54.3" width="1.3" height="1.3" fill="#6f8fc4"/>
<rect x="197.6" y="54.9" width="1" height="1" fill="#fff" opacity=".8"/>
<path d="M205.2 47v9.500" stroke="#2a1d5a" stroke-width="1"/><path d="M203.8 49.300l-2.800 2.400 2.800 2.400M206.6 49.300l2.800 2.400-2.800 2.400" fill="none" stroke="#6a2a8a" stroke-width="1.200"/>
<path d="M218.7 47v9.500" stroke="#2a1d5a" stroke-width="1"/><path d="M217.3 49.300l-2.800 2.400 2.800 2.400M220.1 49.300l2.800 2.400-2.800 2.400" fill="none" stroke="#6a2a8a" stroke-width="1.200"/>
<rect x="228" y="46.5" width="1" height="10" fill="#8fa9d6"/><rect x="229" y="46.5" width="1" height="10" fill="#eef4fd" opacity=".8"/>
<path d="M238 47l1.800 2.500h-3.600z" fill="#25356e"/><rect x="237.200" y="49.200" width="1.600" height="6.300" fill="#25356e"/>
<text x="240.3" y="54.6" font-size="7.6" font-weight="bold" fill="#25356e" text-anchor="start" >y</text>
<path d="M247.5 50.9h4l-2 2.4z" fill="#3c4c78"/>
<circle cx="260" cy="49.600" r="2.400" fill="#5a0f2c"/><circle cx="262.200" cy="47.500" r="1.500" fill="#1d235e"/><path d="M255 55.300h11" stroke="#111" stroke-width="1"/><path d="M254.500 55.300l2.200-1.600v3.200z" fill="#111"/>
<path d="M269.5 50.9h4l-2 2.4z" fill="#3c4c78"/>
<path d="M279 52c.5-3 4-4.200 6.500-2.600" fill="none" stroke="#c0392b" stroke-width="1.100"/><path d="M286.500 47.500l.3 3-2.800-.6z" fill="#c0392b"/><path d="M277 55.300h11" stroke="#111" stroke-width="1"/><path d="M276.500 55.300l2.200-1.600v3.200z" fill="#111"/>
<path d="M291.5 50.9h4l-2 2.4z" fill="#3c4c78"/>
<rect x="298" y="46.5" width="1" height="10" fill="#8fa9d6"/><rect x="299" y="46.5" width="1" height="10" fill="#eef4fd" opacity=".8"/>
<rect x="304.300" y="49.200" width="5.200" height="5.200" fill="#858a94"/>
<path d="M318.4 54.1h3.6M318.59999999999997 55.3h3.2l-1.6 1.8z" stroke="#fff" stroke-width=".9" fill="#fff"/>
<path d="M318.2 53.7h3.6M318.4 54.9h3.2l-1.6 1.8z" stroke="#2b3f73" stroke-width=".8" fill="#2b3f73"/>
<rect x="327" y="46.5" width="1.3" height="1.3" fill="#6f8fc4"/>
<rect x="327.6" y="47.1" width="1" height="1" fill="#fff" opacity=".8"/>
<rect x="327" y="49.1" width="1.3" height="1.3" fill="#6f8fc4"/>
<rect x="327.6" y="49.7" width="1" height="1" fill="#fff" opacity=".8"/>
<rect x="327" y="51.7" width="1.3" height="1.3" fill="#6f8fc4"/>
<rect x="327.6" y="52.3" width="1" height="1" fill="#fff" opacity=".8"/>
<rect x="327" y="54.3" width="1.3" height="1.3" fill="#6f8fc4"/>
<rect x="327.6" y="54.9" width="1" height="1" fill="#fff" opacity=".8"/>
<circle cx="336.300" cy="51.800" r="3.500" fill="#3fc94a" stroke="#0a1a0a" stroke-width="1.400"/>
<rect x="346" y="46.5" width="1" height="10" fill="#8fa9d6"/><rect x="347" y="46.5" width="1" height="10" fill="#eef4fd" opacity=".8"/>
<text x="350" y="50.8" font-size="5.4" font-weight="bold" fill="#111" text-anchor="start" textLength="11" lengthAdjust="spacingAndGlyphs">MM2</text>
<path d="M351.500 54h7" stroke="#111" stroke-width="1.100"/><path d="M360.800 54l-2.800-1.900v3.800z" fill="#111"/>
<rect x="364" y="46.5" width="1" height="10" fill="#8fa9d6"/><rect x="365" y="46.5" width="1" height="10" fill="#eef4fd" opacity=".8"/>
<circle cx="374" cy="52" r="3.300" fill="none" stroke="#9aa3b2" stroke-width="1"/><path d="M370 48l8 8" stroke="#9aa3b2" stroke-width="1"/>
<rect x="383" y="46.5" width="1" height="10" fill="#8fa9d6"/><rect x="384" y="46.5" width="1" height="10" fill="#eef4fd" opacity=".8"/>
<text x="388" y="50.8" font-size="5.4" font-weight="bold" fill="#111" text-anchor="start" textLength="11" lengthAdjust="spacingAndGlyphs">MM2</text>
<path d="M393.500 51.500l4.500 2.700-4.500 2.700z" fill="#2fbf52"/>
<path d="M404.500 47.500v2.200M406.300 47.500v2.200M408.300 47.500v2.200M410 47.500v2.200M412 47.500v2.200" stroke="#25304e" stroke-width=".8"/><path d="M400 55.300h13" stroke="#25304e" stroke-width="1"/><path d="M400.500 53.800v3" stroke="#25304e" stroke-width="1"/>
<path d="M416 50.9h4l-2 2.4z" fill="#3c4c78"/>
<rect x="426.500" y="48" width="3.600" height="2.800" fill="#1d235e"/><rect x="431" y="48" width="3.600" height="2.800" fill="#1d235e"/><path d="M422 55.300h13M422.500 53.800v3" stroke="#25304e" stroke-width="1"/>
<path d="M438 50.9h4l-2 2.4z" fill="#3c4c78"/>
<path d="M453.500 47.600l-4.600 1.400-1 3.200 3.200.4-3.600 3.600 5-1.600 1.200-3.300-3.300-.3z" fill="#e01a1a"/>
<path d="M462 50.800h2.500v-.8h2.500v-.9h3v2.400h-8z" fill="#c0151a"/><path d="M458 55.300h13M458.500 53.800v3" stroke="#25304e" stroke-width="1"/>
<path d="M473.5 50.9h4l-2 2.4z" fill="#3c4c78"/>
<rect x="483.500" y="48.300" width="8" height="2.300" rx="1" fill="#27388a"/><path d="M480 55.300h13M480.500 53.800v3" stroke="#25304e" stroke-width="1"/>
<path d="M495.5 50.9h4l-2 2.4z" fill="#3c4c78"/>
<path d="M504.4 54.1h3.6M504.59999999999997 55.3h3.2l-1.6 1.8z" stroke="#fff" stroke-width=".9" fill="#fff"/>
<path d="M504.2 53.7h3.6M504.4 54.9h3.2l-1.6 1.8z" stroke="#2b3f73" stroke-width=".8" fill="#2b3f73"/>
</g>
<path d="M24.200 64.300v5.200l-3-2.600z" fill="#e8f0fb" stroke="#7f98c6" stroke-width=".9"/>
<path d="M43.5 62.3h7.500v10h-7.500z" fill="#fff" stroke="#222" stroke-width="1.100"/>
<circle cx="44.6" cy="66.39999999999999" r="3.100" fill="#ee8cc0" stroke="#8f1050" stroke-width="1.300"/>
<text x="44.6" y="67.7" font-size="3.400" font-weight="bold" fill="#a0145a" text-anchor="middle">3D</text>
<path d="M139.5 62.3h7.500v10h-7.500z" fill="#fff" stroke="#222" stroke-width="1.100"/>
<circle cx="140.6" cy="66.39999999999999" r="3.100" fill="#ee8cc0" stroke="#8f1050" stroke-width="1.300"/>
<text x="140.6" y="67.7" font-size="3.400" font-weight="bold" fill="#a0145a" text-anchor="middle">3D</text>
<path d="M586.500 64.500l3.200 2.600-3.200 2.600z" fill="none" stroke="#6f86b6" stroke-width=".9"/>
<path d="M597 64.500l4.800 5M601.800 64.500l-4.800 5" stroke="#35508e" stroke-width="1.100"/>
<rect x="6.500" y="65.800" width="2.400" height="2.400" fill="#5a4a8a"/><rect x="6.200" y="68.800" width="5.400" height="3.600" rx="1" fill="#4a4478"/><rect x="9.300" y="66.800" width="2" height="2.400" fill="#3f3f6a"/><path d="M7.500 68v1.500M10.300 69v1" stroke="#8a7ab0" stroke-width=".8"/>
<rect x="5.7" y="149.0" width="2" height="2" fill="#6a2a6a"/>
<rect x="5.7" y="151.7" width="2" height="2" fill="#3a2a5a"/>
<rect x="5.7" y="154.4" width="2" height="2" fill="#6a2a6a"/>
<rect x="8.4" y="149.0" width="2" height="2" fill="#3a2a5a"/>
<rect x="8.4" y="151.7" width="2" height="2" fill="#6a2a6a"/>
<rect x="8.4" y="154.4" width="2" height="2" fill="#3a2a5a"/>
<rect x="11.1" y="149.0" width="2" height="2" fill="#6a2a6a"/>
<rect x="11.1" y="151.7" width="2" height="2" fill="#3a2a5a"/>
<rect x="11.1" y="154.4" width="2" height="2" fill="#6a2a6a"/>
<path d="M596.300 315.400l4.800 5.400M601.100 315.400l-4.800 5.400" stroke="#3d5a9a" stroke-width="1"/>
</svg>
</body></html>
